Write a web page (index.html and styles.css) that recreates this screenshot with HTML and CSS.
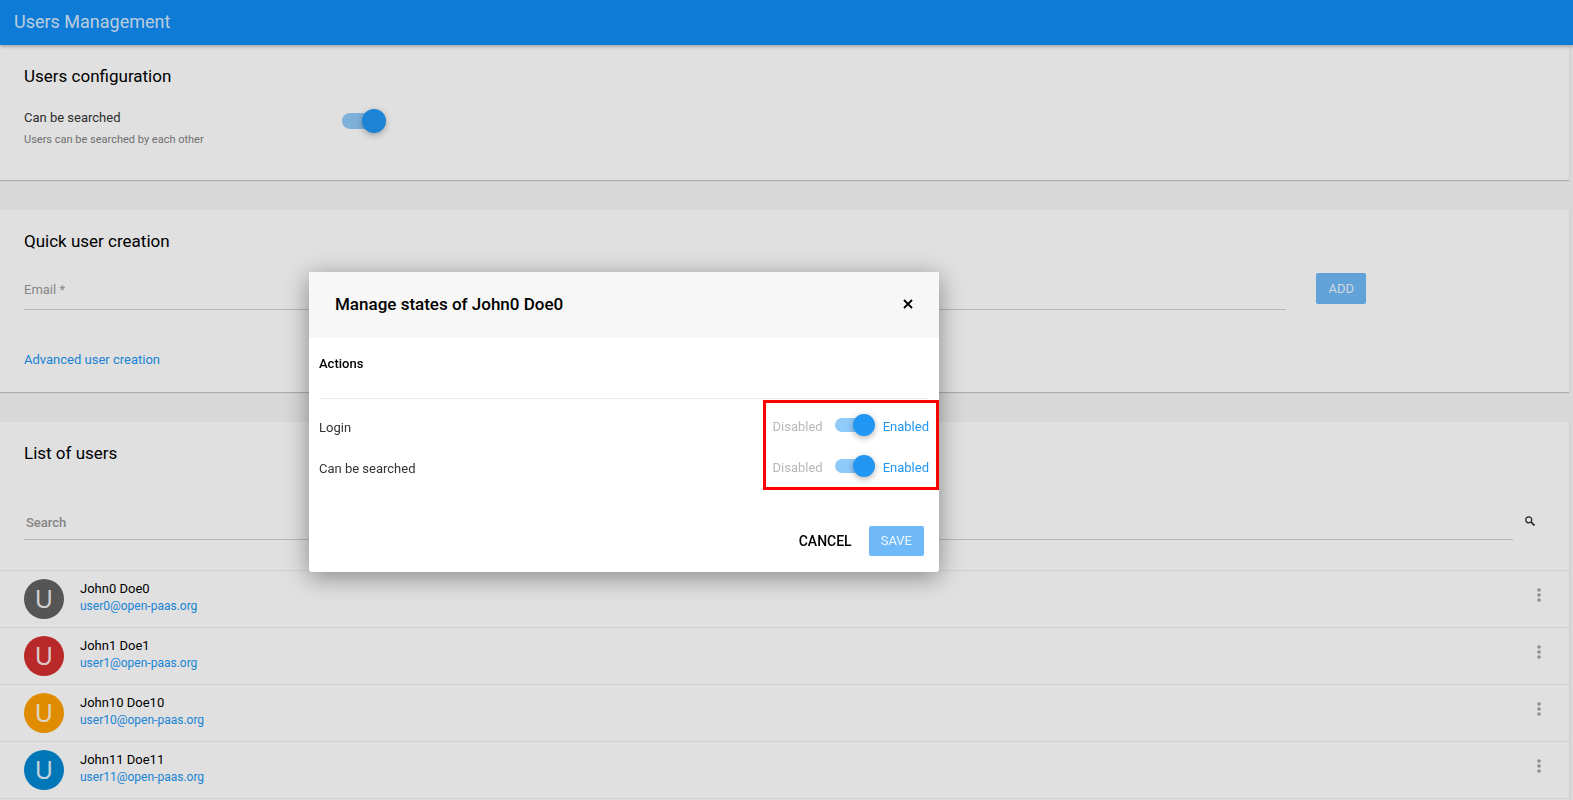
FILE: index.html
```html
<!DOCTYPE html>
<html lang="en">
<head>
<meta charset="utf-8">
<title>Users Management</title>
<link rel="stylesheet" href="styles.css">
</head>
<body>
<header class="topbar"><h1 class="topbar-title">Users Management</h1></header>
<main class="page">
  <section class="card config">
    <h2 class="card-title">Users configuration</h2>
    <div class="setting">
      <div class="setting-text">
        <label class="setting-label" for="searchable">Can be searched</label>
        <p class="setting-hint">Users can be searched by each other</p>
      </div>
      <input class="switch" type="checkbox" id="searchable" checked>
    </div>
  </section>

  <section class="card quick">
    <h2 class="card-title">Quick user creation</h2>
    <form class="quick-form">
      <input class="field quick-email" type="email" placeholder="Email *" aria-label="Email">
      <button class="btn" type="button">ADD</button>
    </form>
    <a class="link" href="#">Advanced user creation</a>
  </section>

  <section class="card list">
    <h2 class="card-title">List of users</h2>
    <div class="search">
      <input class="field search-field" type="text" placeholder="Search" aria-label="Search">
      <button class="icon-btn" type="button" aria-label="Search users">
        <svg width="10" height="10" viewBox="0 0 10 10" fill="none" stroke="#222" stroke-width="1.2"><circle cx="3.8" cy="3.8" r="3"/><path d="M6 6 9.5 9.5" stroke-width="1.6"/></svg>
      </button>
    </div>
    <ul class="users">
      <li class="user">
        <span class="avatar avatar-gray">U</span>
        <div class="user-text"><span class="user-name">John0 Doe0</span><a class="link user-mail" href="#">user0@open-paas.org</a></div>
        <button class="icon-btn more" type="button" aria-label="More"><svg width="4" height="14" viewBox="0 0 4 14" fill="#a2a2a2"><circle cx="2" cy="2" r="1.8"/><circle cx="2" cy="7" r="1.8"/><circle cx="2" cy="12" r="1.8"/></svg></button>
      </li>
      <li class="user">
        <span class="avatar avatar-red">U</span>
        <div class="user-text"><span class="user-name">John1 Doe1</span><a class="link user-mail" href="#">user1@open-paas.org</a></div>
        <button class="icon-btn more" type="button" aria-label="More"><svg width="4" height="14" viewBox="0 0 4 14" fill="#a2a2a2"><circle cx="2" cy="2" r="1.8"/><circle cx="2" cy="7" r="1.8"/><circle cx="2" cy="12" r="1.8"/></svg></button>
      </li>
      <li class="user">
        <span class="avatar avatar-orange">U</span>
        <div class="user-text"><span class="user-name">John10 Doe10</span><a class="link user-mail" href="#">user10@open-paas.org</a></div>
        <button class="icon-btn more" type="button" aria-label="More"><svg width="4" height="14" viewBox="0 0 4 14" fill="#a2a2a2"><circle cx="2" cy="2" r="1.8"/><circle cx="2" cy="7" r="1.8"/><circle cx="2" cy="12" r="1.8"/></svg></button>
      </li>
      <li class="user">
        <span class="avatar avatar-blue">U</span>
        <div class="user-text"><span class="user-name">John11 Doe11</span><a class="link user-mail" href="#">user11@open-paas.org</a></div>
        <button class="icon-btn more" type="button" aria-label="More"><svg width="4" height="14" viewBox="0 0 4 14" fill="#a2a2a2"><circle cx="2" cy="2" r="1.8"/><circle cx="2" cy="7" r="1.8"/><circle cx="2" cy="12" r="1.8"/></svg></button>
      </li>
    </ul>
  </section>
</main>

<div class="backdrop"></div>
<div class="modal" role="dialog" aria-labelledby="modal-title">
  <div class="modal-head">
    <h2 class="modal-title" id="modal-title">Manage states of John0 Doe0</h2>
    <button class="icon-btn" type="button" aria-label="Close">
      <svg width="10" height="10" viewBox="0 0 10 10" fill="none" stroke="#000" stroke-width="1.8"><path d="M1 1 9 9M9 1 1 9"/></svg>
    </button>
  </div>
  <div class="modal-body">
    <h3 class="modal-subtitle">Actions</h3>
    <div class="state">
      <label class="state-label" for="st-login">Login</label>
      <span class="state-off">Disabled</span>
      <input class="switch switch-small" type="checkbox" id="st-login" checked>
      <span class="state-on">Enabled</span>
    </div>
    <div class="state">
      <label class="state-label" for="st-search">Can be searched</label>
      <span class="state-off">Disabled</span>
      <input class="switch switch-small" type="checkbox" id="st-search" checked>
      <span class="state-on">Enabled</span>
    </div>
  </div>
  <div class="modal-foot">
    <button class="btn-flat" type="button">CANCEL</button>
    <button class="btn" type="button">SAVE</button>
  </div>
  <div class="highlight"></div>
</div>
</body>
</html>
```

FILE: styles.css
```css
* { box-sizing: border-box; }

body {
  margin: 0;
  min-height: 100vh;
  background: #f6f6f6;
  color: #333;
  font: 13px/18px Roboto, "Liberation Sans", sans-serif;
}

h1, h2, h3, p, ul { margin: 0; padding: 0; font-weight: 400; }
input, button { font: inherit; }

.topbar {
  position: relative;
  display: flex;
  align-items: center;
  height: 45px;
  padding: 0 14px 2px;
  background: #108cf4;
  box-shadow: 0 1px 4px rgba(0, 0, 0, .35);
}
.topbar-title { color: rgba(255, 255, 255, .84); font-size: 18px; line-height: 24px; }

.page { display: flex; flex-direction: column; gap: 30px; padding-right: 4px; }

.card {
  padding: 19px 24px 0;
  background: #fff;
  box-shadow: 0 1px 1px rgba(0, 0, 0, .2);
}
.card-title { color: #000; font-size: 17px; line-height: 24px; }

.setting { display: flex; gap: 16px; padding: 21px 0 31px; }
.setting-text { width: 302px; }
.setting-label { display: block; margin-bottom: 4px; }
.setting-hint { color: #808080; font-size: 11px; }

.switch {
  appearance: none;
  position: relative;
  width: 44px;
  height: 24px;
  margin: 0;
}
.switch::before {
  content: "";
  position: absolute;
  inset: 4px 8px 4px 0;
  border-radius: 8px;
  background: #90caf9;
}
.switch::after {
  content: "";
  position: absolute;
  top: 0;
  right: 0;
  width: 24px;
  height: 24px;
  border-radius: 50%;
  background: #2196f3;
  box-shadow: 0 2px 6px rgba(0, 0, 0, .3);
}
.switch-small { width: 40px; height: 22px; margin: 0 8px 4px 12px; }
.switch-small::after { width: 22px; height: 22px; }

.field {
  height: 38px;
  padding: 0;
  border: 0;
  border-bottom: 1px solid #dedede;
  border-radius: 0;
  outline: 0;
  background: none;
  color: #333;
}
.field::placeholder { color: #999; opacity: 1; }

.btn {
  height: 31px;
  padding: 0 12px;
  border: 0;
  border-radius: 2px;
  background: #6fb9f8;
  color: rgba(255, 255, 255, .88);
}
.btn-flat {
  padding: 0;
  border: 0;
  background: none;
  color: #000;
  font-size: 14px;
  font-weight: 500;
}
.icon-btn {
  display: flex;
  align-items: center;
  justify-content: center;
  width: 20px;
  height: 20px;
  padding: 0;
  border: 0;
  background: none;
}
.link { color: #2196f3; text-decoration: none; }

.quick { padding-bottom: 23px; }
.quick-form { display: flex; gap: 30px; padding: 19px 0 41px; }
.quick-email { flex: 0 0 83%; padding-bottom: 2px; }
.quick-form .btn { margin-top: 1px; }

.field { border-bottom-color: #d0d0d0; }

.list { min-height: 378px; }
.search { display: flex; align-items: center; gap: 7px; padding: 37px 5px 30px 0; }
.search-field { flex: 1; padding: 3px 0 0 2px; font-weight: 500; }

.users { margin: 0 -24px; list-style: none; }
.user {
  display: flex;
  align-items: flex-start;
  gap: 16px;
  height: 57px;
  padding: 8px 20px 0 24px;
  border-top: 1px solid #eee;
}
.user:last-child { height: 58px; border-bottom: 1px solid #eee; }
.avatar {
  width: 40px;
  height: 40px;
  border-radius: 50%;
  color: rgba(255, 255, 255, .9);
  font: 25px/38px "Noto Sans", sans-serif;
  text-align: center;
}
.avatar-gray { background: #616161; }
.avatar-red { background: #d32f2f; }
.avatar-orange { background: #ffa000; }
.avatar-blue { background: #0288d1; }
.user-text { display: flex; flex: 1; flex-direction: column; align-items: flex-start; gap: 1px; padding-top: 1px; line-height: 17px; }
.user-name { color: #000; }
.user-mail { font-size: 12px; }
.more { margin-top: 6px; }

.backdrop { position: fixed; inset: 0; background: rgba(0, 0, 0, .12); }

.modal {
  position: absolute;
  top: 272px;
  left: 309px;
  width: 630px;
  border-radius: 0 0 3px 3px;
  background: #fff;
  box-shadow: 0 5px 24px rgba(0, 0, 0, .4);
}
.modal-head {
  display: flex;
  align-items: center;
  justify-content: space-between;
  height: 66px;
  padding: 0 21px 3px 26px;
  background: #f7f7f7;
}
.modal-title { color: #000; font-size: 17px; font-weight: 500; }
.modal-body { padding: 17px 10px 0; }
.modal-subtitle {
  height: 44px;
  margin-bottom: 7px;
  border-bottom: 1px solid #eee;
  color: #000;
  font-size: 13px;
  font-weight: 500;
}
.state { display: flex; align-items: center; height: 41px; }
.state-label { flex: 1; padding-top: 2px; }
.state-off { color: #b8b8b8; }
.state-on { color: #2196f3; }
.modal-foot { display: flex; justify-content: flex-end; gap: 17px; padding: 38px 15px 16px; }
.modal-foot .btn { height: 30px; }
.highlight {
  position: absolute;
  top: 128px;
  right: 0;
  width: 176px;
  height: 90px;
  border: 3px solid #f00;
  pointer-events: none;
}
```
